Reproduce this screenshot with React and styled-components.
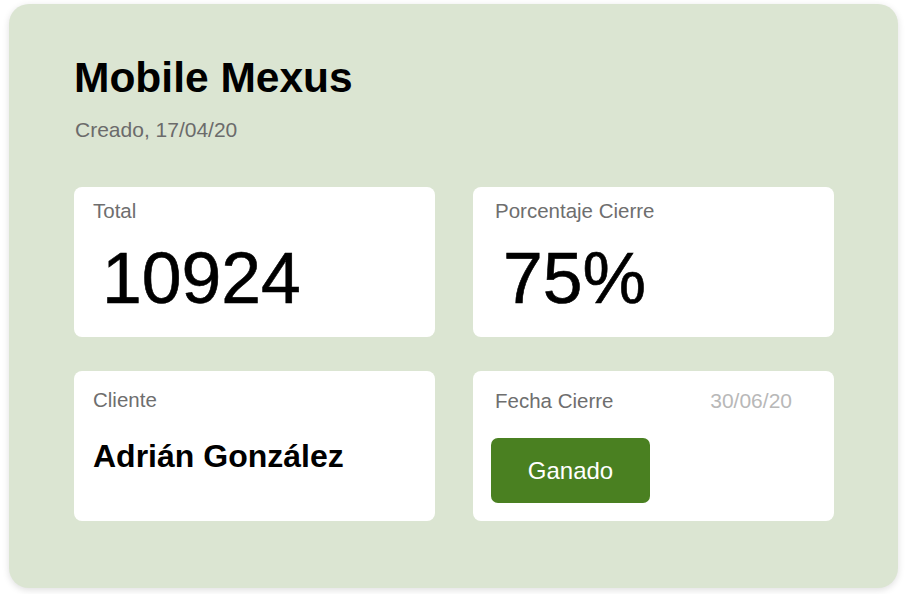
import React from "react";
import styled, { createGlobalStyle } from "styled-components";

const Global = createGlobalStyle`
  html, body { margin: 0; padding: 0; background: #ffffff; }
  body { font-family: "Liberation Sans", Arial, Helvetica, sans-serif; }
  * { box-sizing: border-box; }
`;

const Page = styled.div`
  padding: 4px 10px 6px 9px;
`;

const Card = styled.section`
  width: 889px;
  height: 584px;
  background: #dbe5d2;
  border-radius: 20px;
  box-shadow: 0 2px 7px rgba(0, 0, 0, 0.13);
  padding: 50px 64px 0 65px;
  display: flex;
  flex-direction: column;
`;

const Title = styled.h1`
  margin: 0;
  font-size: 42.5px;
  line-height: 48px;
  font-weight: 700;
  color: #000;
`;

const Subtitle = styled.p`
  margin: 16px 0 0 1px;
  font-size: 21px;
  line-height: 24px;
  color: #6b6b6b;
`;

const Grid = styled.div`
  margin-top: 45px;
  display: grid;
  grid-template-columns: 361px 361px;
  grid-auto-rows: 150px;
  column-gap: 38px;
  row-gap: 34px;
`;

const Tile = styled.div`
  background: #ffffff;
  border-radius: 8px;
  padding: ${(p) => p.$top}px 42px 0 ${(p) => p.$left}px;
  display: flex;
  flex-direction: column;
`;

const LabelRow = styled.div`
  display: flex;
  align-items: baseline;
`;

const Label = styled.span`
  font-size: 20.5px;
  line-height: 24px;
  color: #6e6e6e;
`;

const DateText = styled.span`
  margin-left: auto;
  font-size: 21px;
  line-height: 24px;
  color: #b8b8b8;
`;

const BigNumber = styled.div`
  margin: 15px 0 0 ${(p) => p.$indent}px;
  font-size: 71.5px;
  line-height: 80px;
  color: #000;
  -webkit-text-stroke: 0.6px #000;
`;

const Name = styled.div`
  margin-top: 25px;
  font-size: 32px;
  line-height: 38px;
  font-weight: 700;
  color: #000;
`;

const StatusButton = styled.button`
  margin: 25px 0 0 -4px;
  width: 159px;
  height: 65px;
  border: none;
  border-radius: 7px;
  background: #4a8021;
  color: #ffffff;
  font-family: inherit;
  font-size: 24px;
  padding: 0;
  cursor: pointer;
`;

export default function App() {
  return (
    <>
      <Global />
      <Page>
        <Card>
          <Title>Mobile Mexus</Title>
          <Subtitle>Creado, 17/04/20</Subtitle>
          <Grid>
            <Tile $top={12} $left={19}>
              <Label>Total</Label>
              <BigNumber $indent={9}>10924</BigNumber>
            </Tile>
            <Tile $top={12} $left={22}>
              <Label>Porcentaje Cierre</Label>
              <BigNumber $indent={8}>75%</BigNumber>
            </Tile>
            <Tile $top={17} $left={19}>
              <Label>Cliente</Label>
              <Name>Adrián González</Name>
            </Tile>
            <Tile $top={18} $left={22}>
              <LabelRow>
                <Label>Fecha Cierre</Label>
                <DateText>30/06/20</DateText>
              </LabelRow>
              <StatusButton>Ganado</StatusButton>
            </Tile>
          </Grid>
        </Card>
      </Page>
    </>
  );
}
